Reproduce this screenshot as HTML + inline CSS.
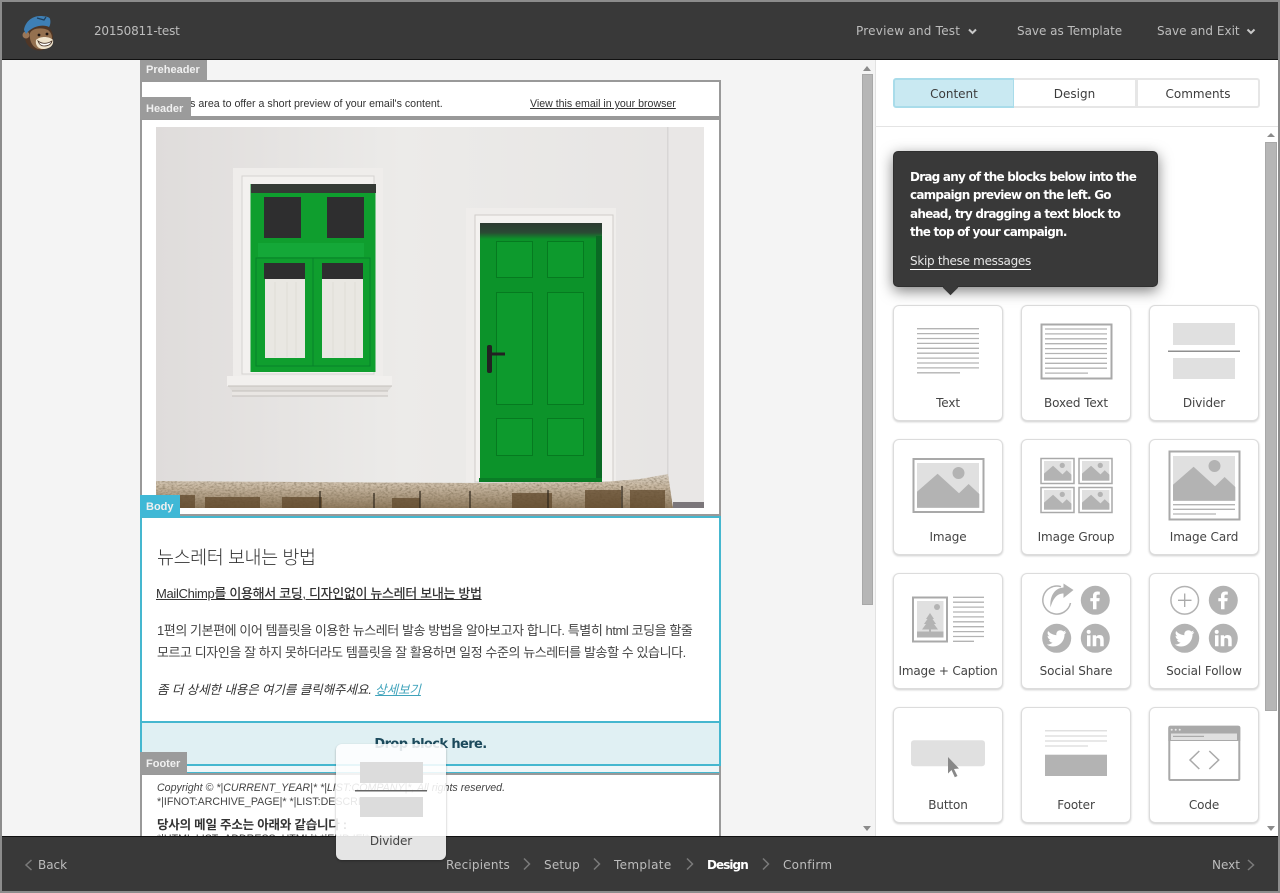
<!DOCTYPE html>
<html lang="en"><head><meta charset="utf-8"><title>20150811-test</title>
<style>
*{box-sizing:border-box}
html,body{margin:0;padding:0;width:1280px;height:893px;overflow:hidden;background:#8c8c8c}
body{position:relative;font-family:"DejaVu Sans","Liberation Sans",sans-serif}
.a{position:absolute;white-space:nowrap}
.ui{font-size:12px;line-height:16px;color:#bdbdbd;letter-spacing:-.02px}
.kr{font-family:"Liberation Sans","Noto Sans CJK KR",sans-serif;color:#3a3a3a}
.en{font-family:"Liberation Sans",sans-serif}
.lab{background:#9b9b9b;color:#f0f0f0;font:bold 11px/21px "Liberation Sans",sans-serif;padding-left:6px}
.tile{position:absolute;width:110px;height:116px;background:#fff;border:1px solid #dcdcdc;border-radius:6px;box-shadow:0 1px 2px rgba(0,0,0,.2)}
.tile span{position:absolute;left:0;right:0;top:88px;text-align:center;font-size:12px;line-height:18px;color:#444;white-space:nowrap;letter-spacing:-.1px}
.tab{position:absolute;top:78px;height:30px;background:#fff;border:2px solid #e6e6e6;text-align:center;font-size:12px;line-height:28px;color:#3c3c3c}
</style></head><body>

<!-- left canvas -->
<div class="a" style="left:2px;top:60px;width:873px;height:776px;background:#f4f4f4"></div>

<!-- preheader -->
<div class="a" style="left:140px;top:80px;width:581px;height:39px;background:#fff;border:2px solid #999;border-bottom-width:3px"></div>
<div class="a en" style="left:157px;top:97px;font-size:10.650px;line-height:14px;color:#333">Use this area to offer a short preview of your email's content.</div>
<div class="a en" style="left:530px;top:97px;font-size:10.600px;line-height:14px;color:#333;text-decoration:underline">View this email in your browser</div>
<div class="a lab" style="left:140px;top:60px;width:67px;height:20px;line-height:21px">Preheader</div>

<!-- header -->
<div class="a" style="left:140px;top:118px;width:581px;height:398px;background:#fff;border:2px solid #999;border-top-width:2px"></div>
<div class="a lab" style="left:140px;top:97px;width:51px;height:22px;line-height:24px">Header</div>
<svg class="a" style="left:156px;top:127px" width="548" height="381" viewBox="156 127 548 381">
<defs>
<linearGradient id="w" x1="0" x2="1" y1="0" y2="0"><stop offset="0" stop-color="#dfdcdb"/><stop offset=".45" stop-color="#ecebe9"/><stop offset="1" stop-color="#e6e4e3"/></linearGradient>
<linearGradient id="st" x1="0" x2="0" y1="0" y2="1"><stop offset="0" stop-color="#d9d0c3"/><stop offset=".35" stop-color="#cbbba5"/><stop offset="1" stop-color="#8f7a5e"/></linearGradient>
<linearGradient id="dt" x1="0" x2="0" y1="0" y2="1"><stop offset="0" stop-color="#2c3a31"/><stop offset=".6" stop-color="#2a4a34"/><stop offset="1" stop-color="#0c932a"/></linearGradient>
<filter id="rough" x="0" y="0" width="100%" height="100%"><feTurbulence type="fractalNoise" baseFrequency=".35 .6" numOctaves="3" seed="4"/><feColorMatrix values="0 0 0 0 .2  0 0 0 0 .15  0 0 0 0 .08  1.6 0 0 0 -.62"/><feComposite in2="SourceGraphic" operator="in"/><feMerge><feMergeNode in="SourceGraphic"/><feMergeNode/></feMerge></filter>
</defs>
<rect x="156" y="127" width="548" height="381" fill="url(#w)"/>
<rect x="668" y="127" width="36" height="381" fill="#e9e7e6"/>
<rect x="667" y="127" width="1.500" height="352" fill="#d8d6d5"/>
<!-- window surround -->
<rect x="233" y="168" width="150" height="210" fill="#efedeb"/>
<rect x="242" y="176" width="132" height="198" fill="#f3f1ef" stroke="#d6d3d1" stroke-width="1"/>
<rect x="227" y="376" width="165" height="10" fill="#f2f0ee"/>
<path d="M228 386H392L388 391H232Z" fill="#dedbd8"/><rect x="232" y="391" width="156" height="5" fill="#e9e6e3"/><path d="M228 386H392M232 391H388M232 396H388" stroke="#c4c0bc" fill="none"/>
<!-- window -->
<rect x="250.500" y="184" width="125" height="188" fill="#0f9e2e"/>
<rect x="251" y="184" width="125" height="9" fill="#343a35"/>
<rect x="264" y="197" width="37" height="41" fill="#2e2e2f"/>
<rect x="327" y="197" width="37" height="41" fill="#2e2e2f"/>
<rect x="258" y="243" width="106" height="14" fill="#14a838"/>
<rect x="264" y="263" width="41" height="16" fill="#2e2e2f"/>
<rect x="322" y="263" width="41" height="16" fill="#2e2e2f"/>
<rect x="265" y="279" width="40" height="79" fill="#e9e7e2"/>
<rect x="322" y="279" width="41" height="79" fill="#e9e7e2"/>
<path d="M275 282V357M287 282V357M296 282V357M333 282V357M345 282V357M355 282V357" stroke="#dedcd6" fill="none"/>
<path d="M256 258H370V366H256ZM313 258V366" fill="none" stroke="#07812a" stroke-width="1"/>
<!-- door frame -->
<rect x="466" y="208" width="150" height="274" fill="#efedeb"/>
<rect x="475" y="215" width="138" height="267" fill="#f4f2f0" stroke="#cfccc9"/>
<!-- door -->
<rect x="480" y="223" width="122" height="259" fill="#0c932a"/>
<rect x="480" y="223" width="122" height="16" fill="url(#dt)"/>
<rect x="596" y="236" width="6" height="246" fill="#0a6a24"/>
<rect x="479" y="478" width="123" height="4" fill="#0a7d26"/>
<g fill="#0d9a2d" stroke="#067a20" stroke-width="1">
<rect x="496.500" y="241.500" width="36" height="36"/><rect x="547.500" y="241.500" width="36" height="36"/>
<rect x="496.500" y="292.500" width="36" height="112"/><rect x="547.500" y="292.500" width="36" height="112"/>
<rect x="496.500" y="418.500" width="36" height="37"/><rect x="547.500" y="418.500" width="36" height="37"/>
</g>
<rect x="487" y="345" width="5" height="28" rx="2" fill="#222"/><rect x="490" y="352.500" width="15" height="3" fill="#222"/>
<!-- stone -->
<path d="M156 481L300 482L480 483L602 482L640 479L668 474L673 508H156Z" fill="url(#st)" filter="url(#rough)"/>
<g fill="#5e4629" opacity=".72">
<rect x="165" y="495" width="30" height="13"/><rect x="205" y="497" width="55" height="11"/><rect x="282" y="497" width="40" height="11"/><rect x="392" y="498" width="28" height="10"/><rect x="512" y="493" width="40" height="15"/><rect x="585" y="490" width="36" height="18"/><rect x="630" y="490" width="35" height="18"/>
</g>
<path d="M320 491V508M374 493V508M420 491V508M470 491V508M548 490V508M622 486V508" stroke="#2d2519" stroke-width="1.200"/>
<rect x="673" y="502" width="31" height="6" fill="#7b767a"/>
</svg>

<!-- body -->
<div class="a" style="left:140px;top:516px;width:581px;height:207px;background:#fff;border:2px solid #45b7cf"></div>
<div class="a lab" style="left:140px;top:495px;width:40px;height:22px;line-height:24px;background:#3fb8d6">Body</div>
<div class="a kr" style="left:157px;top:545px;font-size:18.500px;line-height:26px;letter-spacing:-.45px;font-weight:300;color:#333">뉴스레터 보내는 방법</div>
<div class="a kr" style="left:156px;top:585px;font-size:13px;line-height:18px;letter-spacing:-.33px;font-weight:500;text-decoration:underline;color:#333">MailChimp를 이용해서 코딩, 디자인없이 뉴스레터 보내는 방법</div>
<div class="a kr" style="left:157px;top:620px;font-size:13px;line-height:22px;letter-spacing:-.43px;color:#444">1편의 기본편에 이어 템플릿을 이용한 뉴스레터 발송 방법을 알아보고자 합니다. 특별히 html 코딩을 할줄<br>모르고 디자인을 잘 하지 못하더라도 템플릿을 잘 활용하면 일정 수준의 뉴스레터를 발송할 수 있습니다.</div>
<div class="a kr" style="left:157px;top:681px;font-size:12.500px;line-height:18px;letter-spacing:-.07px;font-style:italic;color:#333">좀 더 상세한 내용은 여기를 클릭해주세요. <span style="color:#3fa3bb;text-decoration:underline">상세보기</span></div>

<!-- drop zone -->
<div class="a" style="left:140px;top:721px;width:581px;height:45px;background:#e0f0f3;border:2px solid #45b7cf"></div>
<div class="a" style="left:140px;top:766px;width:581px;height:8px;background:#eef6f8;border-left:2px solid #999;border-right:2px solid #999;border-bottom:2px solid #45b7cf"></div>
<div class="a" style="left:140px;top:735px;width:581px;text-align:center;font-size:13px;line-height:20px;font-weight:bold;color:#1c4a5c;letter-spacing:-.6px">Drop block here.</div>

<!-- footer -->
<div class="a" style="left:140px;top:773px;width:581px;height:63px;background:#fff;border:2px solid #999;border-bottom:0"></div>
<div class="a lab" style="left:140px;top:752px;width:47px;height:22px;line-height:24px">Footer</div>
<div class="a en" style="left:157px;top:781px;font-size:10.650px;line-height:14px;color:#444"><i>Copyright © *|CURRENT_YEAR|* *|LIST:COMPANY|*, All rights reserved.</i><br>*|IFNOT:ARCHIVE_PAGE|* *|LIST:DESCRIPTION|*</div>
<div class="a kr" style="left:157px;top:816px;font-size:12.500px;line-height:18px;font-weight:bold;letter-spacing:-.2px;color:#333">당사의 메일 주소는 아래와 같습니다 :</div>
<div class="a en" style="left:157px;top:832px;font-size:10.650px;line-height:14px;color:#444">*|HTML:LIST_ADDRESS_HTML|* *|END:IF|*</div>

<!-- left scrollbar -->
<div class="a" style="left:862px;top:74px;width:11px;height:531px;background:#b6b6b6;border:1px solid #a8a8a8"></div>

<!-- right panel -->
<div class="a" style="left:875px;top:60px;width:403px;height:776px;background:#fff;border-left:1px solid #e2e2e2"></div>
<div class="a" style="left:875px;top:126px;width:403px;height:1px;background:#e4e4e4"></div>
<div class="tab" style="left:893px;width:122px;background:#c9e9f2;border-color:#a9dcea;border-radius:3px 0 0 3px">Content</div>
<div class="tab" style="left:1014px;width:123px;border-left:0">Design</div>
<div class="tab" style="left:1136px;width:124px;border-radius:0 3px 3px 0">Comments</div>
<div class="a" style="left:1265px;top:142px;width:12px;height:569px;background:#b6b6b6;border:1px solid #a8a8a8"></div>

<div class="tile" style="left:893px;top:305px"><span>Text</span></div>
<div class="tile" style="left:1021px;top:305px"><span>Boxed Text</span></div>
<div class="tile" style="left:1149px;top:305px"><span>Divider</span></div>
<div class="tile" style="left:893px;top:439px"><span>Image</span></div>
<div class="tile" style="left:1021px;top:439px"><span>Image Group</span></div>
<div class="tile" style="left:1149px;top:439px"><span>Image Card</span></div>
<div class="tile" style="left:893px;top:573px"><span style="letter-spacing:-.17px">Image + Caption</span></div>
<div class="tile" style="left:1021px;top:573px"><span>Social Share</span></div>
<div class="tile" style="left:1149px;top:573px"><span>Social Follow</span></div>
<div class="tile" style="left:893px;top:707px"><span>Button</span></div>
<div class="tile" style="left:1021px;top:707px"><span>Footer</span></div>
<div class="tile" style="left:1149px;top:707px"><span>Code</span></div>

<!-- icons -->
<svg class="a" style="left:0;top:0" width="1280" height="893" viewBox="0 0 1280 893">
<defs>
<g id="pic"><rect x="0" y="0" width="62" height="45" fill="#e0e0e0"/><circle cx="41.500" cy="10" r="6" fill="#b3b3b3"/><path d="M0 28.700L20.600 10.700 42 30.300 51.600 21 62.300 31V44.700H0Z" fill="#b3b3b3"/></g>
<g id="fb"><circle r="14.500" fill="#b3b3b3"/><path d="M1.200 9V1H4L4.400-2.200H1.200V-4.200C1.200-5.200 1.600-5.700 2.700-5.700H4.500V-8.600C4-8.700 3-8.800 2-8.800-.6-8.800-2.300-7.300-2.300-4.500V-2.200H-5V1H-2.300V9Z" fill="#fff"/></g>
<g id="tw"><circle r="14.500" fill="#b3b3b3"/><path d="M9.500-6.300C8.800-6 8.100-5.800 7.300-5.700 8.100-6.200 8.700-6.900 9-7.800 8.200-7.300 7.400-7 6.500-6.800 5.800-7.600 4.700-8 3.600-8 1.400-8-.4-6.200-.4-4-.4-3.700-.4-3.400-.3-3.100-3.600-3.300-6.600-4.900-8.600-7.300-8.900-6.700-9.100-6-9.100-5.300-9.100-3.900-8.400-2.700-7.300-2-8-2-8.600-2.200-9.100-2.500V-2.400C-9.100-.5-7.800 1.100-6 1.500-6.600 1.700-7.300 1.700-7.800 1.600-7.300 3.100-5.900 4.300-4.100 4.300-6 5.800-8.300 6.500-10 6.300-8.200 7.500-6 8.200-3.700 8.200 3.600 8.200 7.800 2 7.800-3.400V-4C8.500-4.500 9.100-5.300 9.500-6.300Z" fill="#fff"/></g>
<g id="in"><circle r="14.500" fill="#b3b3b3"/><path d="M-8.300-3H-4.800V8H-8.300ZM-6.600-8.400A2 2 0 1 1-6.600-4.400 2 2 0 1 1-6.600-8.400ZM-2.600-3H.7V-1.500C1.200-2.400 2.400-3.300 4.200-3.300 7.700-3.300 8.400-1 8.400 2V8H4.900V2.700C4.900 1.400 4.900-.2 3.100-.2 1.300-.2 1-.8 1 2.600V8H-2.600Z" fill="#fff"/></g>
</defs>
<!-- Text -->
<path d="M917 328.700H979M917 333.600H979M917 338.500H979M917 343.400H979M917 348.300H979M917 353.200H979M917 358.100H979M917 363H979M917 367.900H979M917 372.800H960" stroke="#b3b3b3" stroke-width="1.300" fill="none"/>
<!-- Boxed -->
<rect x="1041.500" y="324.500" width="70" height="54" fill="none" stroke="#a9a9a9" stroke-width="2"/>
<path d="M1045 329H1107M1045 333.900H1107M1045 338.800H1107M1045 343.700H1107M1045 348.600H1107M1045 353.500H1107M1045 358.400H1107M1045 363.300H1107M1045 368.200H1107M1045 373.100H1088" stroke="#b3b3b3" stroke-width="1.300" fill="none"/>
<!-- Divider -->
<rect x="1173" y="323" width="62" height="22" fill="#e0e0e0"/><rect x="1168" y="350.500" width="72" height="1.500" fill="#8f8f8f"/><rect x="1173" y="358" width="62" height="21" fill="#e0e0e0"/>
<!-- Image -->
<rect x="913.500" y="459" width="70" height="53" fill="#fff" stroke="#a9a9a9" stroke-width="2"/>
<use href="#pic" transform="translate(917 463)"/>
<!-- Image group -->
<rect x="1041" y="458.500" width="33" height="25" fill="#fff" stroke="#a9a9a9" stroke-width="1.500"/><use href="#pic" transform="translate(1044 461) scale(.44)"/>
<rect x="1079" y="458.500" width="33" height="25" fill="#fff" stroke="#a9a9a9" stroke-width="1.500"/><use href="#pic" transform="translate(1082 461) scale(.44)"/>
<rect x="1041" y="487.500" width="33" height="25" fill="#fff" stroke="#a9a9a9" stroke-width="1.500"/><use href="#pic" transform="translate(1044 490) scale(.44)"/>
<rect x="1079" y="487.500" width="33" height="25" fill="#fff" stroke="#a9a9a9" stroke-width="1.500"/><use href="#pic" transform="translate(1082 490) scale(.44)"/>
<!-- Image card -->
<rect x="1169.500" y="451.500" width="70" height="68" fill="#fff" stroke="#a9a9a9" stroke-width="2"/>
<use href="#pic" transform="translate(1173 456)"/>
<path d="M1173 504.700H1235M1173 509.300H1235M1173 514H1216" stroke="#b3b3b3" stroke-width="1.300"/>
<!-- Image + caption -->
<rect x="913" y="597.500" width="34" height="44" fill="#fff" stroke="#a9a9a9" stroke-width="2"/>
<rect x="917" y="601" width="26.500" height="36" fill="#e0e0e0"/><rect x="917" y="631.500" width="26.500" height="6" fill="#b3b3b3"/>
<circle cx="937" cy="607" r="3" fill="#b3b3b3"/>
<path d="M930 613L934 619H932.500L936 624H934L938 629.500H931V632H929V629.500H922L926 624H924L927.500 619H926Z" fill="#b3b3b3"/>
<path d="M953 597.300H984M953 602.200H984M953 607.100H984M953 612H984M953 616.900H984M953 621.800H984M953 626.700H984M953 631.600H984M953 636.500H984M953 641.300H974" stroke="#b3b3b3" stroke-width="1.300"/>
<!-- Social share -->
<path d="M1070.500 603A14 14 0 1 1 1061 586.700" fill="none" stroke="#b3b3b3" stroke-width="1.500"/>
<path d="M1063.500 583.500L1073.500 590 1063.500 598V593.500C1057 593.500 1053 598.500 1050.500 607.500 1049.500 597 1054 588 1063.500 587.500Z" fill="#b3b3b3"/>
<use href="#fb" x="1095.300" y="600.300"/><use href="#tw" x="1056.700" y="638.300"/><use href="#in" x="1095.300" y="638.300"/>
<!-- Social follow -->
<circle cx="1184.700" cy="600.300" r="13.800" fill="none" stroke="#b3b3b3" stroke-width="1.500"/>
<path d="M1184.700 593.500V607M1178 600.300H1191.500" stroke="#a9a9a9" stroke-width="1.300"/>
<use href="#fb" x="1223.300" y="600.300"/><use href="#tw" x="1184.700" y="638.300"/><use href="#in" x="1223.300" y="638.300"/>
<!-- Button -->
<rect x="911" y="740.300" width="74" height="26" rx="3" fill="#e0e0e0"/>
<path d="M948 757L959 768.500 954 769 957.500 776 954.800 777.300 951.500 770 948 773.500Z" fill="#888"/>
<!-- Footer -->
<path d="M1045 730.800H1107M1045 736H1107M1045 741H1107M1045 746H1088" stroke="#e0e0e0" stroke-width="1.500"/>
<rect x="1045" y="754.700" width="62" height="21.300" fill="#b3b3b3"/>
<!-- Code -->
<rect x="1169.300" y="726.700" width="70" height="53.300" rx="1" fill="#fff" stroke="#a9a9a9" stroke-width="2"/>
<path d="M1168.300 728A2.500 2.500 0 0 1 1170.500 725.700H1238A2.500 2.500 0 0 1 1240.300 728V741H1168.300Z" fill="#a9a9a9"/>
<rect x="1171" y="733.500" width="66" height="6.500" fill="#e0e0e0"/><rect x="1173" y="735.800" width="31" height="1.200" fill="#a9a9a9"/>
<g fill="#e8e8e8"><circle cx="1171.700" cy="729.700" r="1"/><circle cx="1175.700" cy="729.700" r="1"/><circle cx="1179.700" cy="729.700" r="1"/></g>
<path d="M1199.300 751L1190 760 1199.300 769M1209.300 751L1218.700 760 1209.300 769" fill="none" stroke="#a9a9a9" stroke-width="1.500"/>
<!-- scroll arrows -->
<g fill="#8b8b8b"><path d="M863 71H871L867 66Z"/><path d="M863 826H871L867 831Z"/><path d="M1267 137H1275L1271 133Z"/><path d="M1267 826H1275L1271 831Z"/></g>
</svg>

<!-- tooltip -->
<div class="a" style="left:893px;top:151px;width:265px;height:136px;background:#393939;border-radius:5px;box-shadow:0 4px 14px rgba(0,0,0,.5);border:1px solid #2f2f2f"></div>
<div class="a" style="left:945px;top:282px;width:11px;height:11px;background:#393939;transform:rotate(45deg)"></div>
<div class="a" style="left:910px;top:168px;font-size:12px;font-weight:bold;line-height:18.400px;color:#fff;letter-spacing:-.77px">Drag any of the blocks below into the<br>campaign preview on the left. Go<br>ahead, try dragging a text block to<br>the top of your campaign.</div>
<div class="a" style="left:910px;top:253px;font-size:12px;line-height:16px;color:#e6e6e6;border-bottom:1px solid #fff;letter-spacing:-.3px">Skip these messages</div>

<!-- top bar -->
<div class="a" style="left:2px;top:2px;width:1276px;height:58px;background:#393939;border-bottom:1px solid #111"></div>
<svg class="a" style="left:20px;top:13px" width="40" height="40" viewBox="0 0 40 40">
<ellipse cx="19" cy="24" rx="14" ry="13.500" fill="#4f3626"/>
<circle cx="6" cy="22" r="3.500" fill="#9a7657"/>
<path d="M10 20C12 15 22 14 28 17 32 20 33 25 31 30 29 35 24 37 18 36 12 34 9 27 10 20Z" fill="#94704f"/>
<path d="M16 27C20 23 29 23 33 27 34 32 30 36 23 36 18 36 15 32 16 27Z" fill="#efe3cc"/>
<path d="M18 28C22 31 27 31 32 28 31 32 27 33 24 33 21 33 19 31 18 28Z" fill="#fff" stroke="#4a3527" stroke-width=".8"/>
<circle cx="19" cy="22" r="1.400" fill="#1d1512"/><circle cx="27" cy="21" r="1.400" fill="#1d1512"/>
<path d="M4 17C5 9 12 3 20 3 25 3 30 4 30 6 31 9 30 13 29 14 23 11 12 13 6 21Z" fill="#3e7fb5"/>
<path d="M17 5L24 7 26 4" stroke="#1f3e5a" stroke-width="1.200" fill="none"/>
</svg>
<div class="a ui" style="left:94px;top:23px;letter-spacing:-.22px">20150811-test</div>
<div class="a ui" style="left:856px;top:23px;letter-spacing:.23px">Preview and Test</div>
<div class="a ui" style="left:1017px;top:23px">Save as Template</div>
<div class="a ui" style="left:1157px;top:23px;letter-spacing:.02px">Save and Exit</div>
<svg class="a" style="left:0;top:20px" width="1280" height="24" viewBox="0 20 1280 24"><path d="M969 29.500L972.500 33 976 29.500M1247.500 29.500L1251 33 1254.500 29.500" fill="none" stroke="#c8c8c8" stroke-width="2"/></svg>

<!-- bottom bar -->
<div class="a" style="left:2px;top:836px;width:1276px;height:55px;background:#393939;border-top:1px solid #111"></div>
<div class="a ui" style="left:38px;top:857px">Back</div>
<div class="a ui" style="left:446px;top:857px;letter-spacing:.2px">Recipients</div>
<div class="a ui" style="left:544px;top:857px;letter-spacing:.2px">Setup</div>
<div class="a ui" style="left:614px;top:857px;letter-spacing:.35px">Template</div>
<div class="a ui" style="left:707px;top:857px;color:#fff;font-weight:bold;letter-spacing:-.95px">Design</div>
<div class="a ui" style="left:783px;top:857px;letter-spacing:.3px">Confirm</div>
<div class="a ui" style="left:1212px;top:857px">Next</div>
<svg class="a" style="left:0;top:850px" width="1280" height="30" viewBox="0 850 1280 30"><path d="M31.500 860L26 865 31.500 870M524 858.500L529.500 864 524 869.500M594 858.500L599.500 864 594 869.500M687 858.500L692.500 864 687 869.500M763 858.500L768.500 864 763 869.500M1248 860L1253.500 865 1248 870" fill="none" stroke="#7a7a7a" stroke-width="1.500"/></svg>

<!-- drag ghost -->
<div class="a" style="left:336px;top:744px;width:110px;height:116px;background:rgba(255,255,255,.87);border-radius:6px;box-shadow:0 1px 2px rgba(0,0,0,.3)"></div>
<svg class="a" style="left:336px;top:744px" width="110" height="116" viewBox="336 744 110 116"><rect x="360" y="762" width="63" height="21" fill="#dcdcdc"/><rect x="355" y="790" width="72" height="1.500" fill="#666"/><rect x="360" y="797" width="63" height="20" fill="#dcdcdc"/></svg>
<div class="a" style="left:336px;top:832px;width:110px;text-align:center;font-size:12px;line-height:18px;color:#444;letter-spacing:-.1px">Divider</div>
</body></html>
